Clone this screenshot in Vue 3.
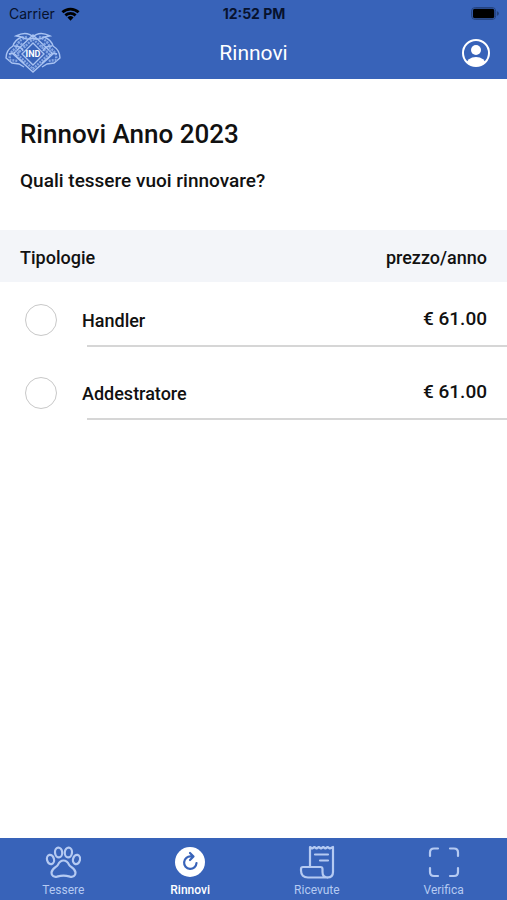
<template>
  <div class="app">
    <header class="top">
      <div class="status-bar">
        <div class="carrier">
          <span>Carrier</span>
          <svg class="wifi" viewBox="0 0 20 14" aria-hidden="true">
            <path d="M1.5 5.2a12.6 12.6 0 0 1 17 0M4.6 8.5a8 8 0 0 1 10.8 0" />
            <path class="solid" d="M6.8 10.6a4.8 4.8 0 0 1 6.4 0L10 14z" />
          </svg>
        </div>
        <span class="time">12:52 PM</span>
        <svg class="battery" viewBox="0 0 30 14" aria-hidden="true">
          <rect class="shell" x="0.5" y="0.5" width="26" height="13" rx="4" />
          <rect x="2" y="2" width="23" height="10" rx="2" />
          <path class="tip" d="M28 4.5a2.6 2.6 0 0 1 0 5z" />
        </svg>
      </div>

      <div class="nav-bar">
        <svg class="logo" viewBox="0 0 56 42" aria-hidden="true">
          <g class="crest">
            <path d="M28 3 48 22 28 40 8 22z" />
            <path class="beads" d="M28 7 44 22 28 37 12 22z" />
            <path d="M28 11 39 22 28 33 17 22z" />
            <path d="M28 5C23 0 17 1 11 4l6 1c-5 2-8 5-9 9-5 3-7 7-7 12l6 5 7 1 5 3" />
            <path d="M28 5c5-5 11-4 17-1l-6 1c5 2 8 5 9 9 5 3 7 7 7 12l-6 5-7 1-5 3" />
            <path class="beads" d="M22 5c-6 2-10 6-11 11-5 3-7 7-6 12l8 1M34 5c6 2 10 6 11 11 5 3 7 7 6 12l-8 1" />
            <path d="M9 14c5 0 8 2 9 5M47 14c-5 0-8 2-9 5M4 22c4-2 7 0 8 3l7 6M52 22c-4-2-7 0-8 3l-7 6" />
            <path d="M17 5c4 3 7 3 11 1 4 2 7 2 11-1" />
            <path class="beads" d="M13 10l8 5M43 10l-8 5M15 20l-7-2M41 20l7-2" />
          </g>
          <text x="28" y="25" text-anchor="middle">IND</text>
        </svg>
        <h1>Rinnovi</h1>
        <button class="profile" type="button" aria-label="Profilo">
          <svg viewBox="0 0 30 30" aria-hidden="true">
            <defs>
              <clipPath id="profile-clip"><circle cx="15" cy="15" r="13" /></clipPath>
            </defs>
            <circle class="ring" cx="15" cy="15" r="13" />
            <circle cx="15" cy="12" r="5" />
            <ellipse cx="15" cy="27" rx="10" ry="8" clip-path="url(#profile-clip)" />
          </svg>
        </button>
      </div>
    </header>

    <main>
      <section class="intro">
        <h2>Rinnovi Anno 2023</h2>
        <p>Quali tessere vuoi rinnovare?</p>
      </section>

      <div class="list-head">
        <span>Tipologie</span>
        <span>prezzo/anno</span>
      </div>

      <ul class="cards">
        <li v-for="card in cards" :key="card.id">
          <label class="card">
            <input v-model="selected" type="checkbox" :value="card.id" />
            <span class="name">{{ card.name }}</span>
            <span class="price">€ {{ card.price.toFixed(2) }}</span>
          </label>
        </li>
      </ul>
    </main>

    <nav class="tabs">
      <a
        v-for="tab in tabs"
        :key="tab.id"
        :href="'#' + tab.id"
        class="tab"
        :class="{ active: tab.id === activeTab }"
        @click.prevent="activeTab = tab.id"
      >
        <svg v-if="tab.id === 'tessere'" viewBox="0 0 36 36" aria-hidden="true">
          <ellipse cx="13.6" cy="8.5" rx="3.6" ry="4.9" transform="rotate(-6 13.6 8.5)" />
          <ellipse cx="23.4" cy="8.5" rx="3.6" ry="4.9" transform="rotate(6 23.4 8.5)" />
          <ellipse cx="5.5" cy="15.5" rx="3.5" ry="4.7" transform="rotate(-14 5.5 15.5)" />
          <ellipse cx="31.5" cy="15.5" rx="3.5" ry="4.7" transform="rotate(14 31.5 15.5)" />
          <path d="M18.5 16.5c-3 0-4.5 2-5.6 4.4-1 2.2-6.4 3.6-6.4 7.800 0 3.300 2.600 4.600 5.500 3.900 2.200-.6 4.200-1 6.500-1s4.300.4 6.500 1c2.900.7 5.500-.6 5.500-3.900 0-4.200-5.400-5.600-6.400-7.800-1.100-2.400-2.600-4.400-5.600-4.400z" />
        </svg>
        <svg v-else-if="tab.id === 'rinnovi'" viewBox="0 0 36 36" aria-hidden="true">
          <circle class="disc" cx="18" cy="18" r="15" />
          <path class="arrow" d="M19 12.500a6.200 6.200 0 1 0 5.500 6.500M18 9l3.500 3.500L18 16" />
        </svg>
        <svg v-else-if="tab.id === 'ricevute'" viewBox="0 0 36 36" aria-hidden="true">
          <path d="M11 23V3l2.200 1.500L15.400 3l2.200 1.500L19.800 3 22 4.500 24.200 3l2.200 1.500L28.600 3l2.200 1.500L34 3v25c0 3.500-2 5.500-5.500 5.500" />
          <path d="M28.500 33.500H9c-4.500 0-7-2.500-7-7V25c0-1.300.7-2 2-2h17.500c1.300 0 2 .7 2 2v3c0 3.500 1.700 5.500 5 5.500zM16 10.500h13M21 16.500h8" />
        </svg>
        <svg v-else viewBox="0 0 36 36" aria-hidden="true">
          <path d="M4 12V8.500c0-3 1-4 4-4h4M24 4.500h4c3 0 4 1 4 4V12M32 24v4c0 3-1 4-4 4h-4M12 32H8c-3 0-4-1-4-4v-4" />
        </svg>
        <span>{{ tab.label }}</span>
      </a>
    </nav>
  </div>
</template>

<script setup>
import { ref } from 'vue'

const cards = [
  { id: 'handler', name: 'Handler', price: 61 },
  { id: 'addestratore', name: 'Addestratore', price: 61 }
]

const tabs = [
  { id: 'tessere', label: 'Tessere' },
  { id: 'rinnovi', label: 'Rinnovi' },
  { id: 'ricevute', label: 'Ricevute' },
  { id: 'verifica', label: 'Verifica' }
]

const selected = ref([])
const activeTab = ref('rinnovi')
</script>

<style>
body {
  margin: 0;
  background: #ffffff;
}
</style>

<style scoped>
.app {
  display: flex;
  flex-direction: column;
  min-height: 100vh;
  font-family: Roboto, 'Liberation Sans', sans-serif;
  font-weight: 500;
  color: #111111;
}

.top {
  background: #3863b9;
}

.status-bar {
  display: grid;
  grid-template-columns: 1fr auto 1fr;
  align-items: center;
  height: 27px;
  padding: 0 8px 0 9px;
  font-family: Inter, sans-serif;
  font-size: 14px;
  color: #07122e;
}

.carrier {
  display: flex;
  align-items: center;
  gap: 6px;
  font-weight: 400;
}

.wifi {
  width: 19px;
  height: 14px;
  fill: none;
  stroke: #000000;
  stroke-width: 3;
}

.wifi .solid {
  fill: #000000;
  stroke: none;
}

.time {
  font-weight: 700;
}

.battery {
  width: 28px;
  height: 13px;
  justify-self: end;
  fill: #000000;
}

.battery .shell {
  fill: none;
  stroke: #234079;
}

.battery .tip {
  fill: #234079;
}

.nav-bar {
  display: grid;
  grid-template-columns: 1fr auto 1fr;
  align-items: center;
  height: 52px;
  padding: 0 5px;
}

.logo {
  width: 56px;
  height: 42px;
}

.crest {
  fill: none;
  stroke: #a9c3f2;
  stroke-width: 1.4;
}

.crest .beads {
  stroke-width: 2.4;
  stroke-dasharray: 2 1;
  stroke: #86a7e4;
}

.logo text {
  font-size: 9px;
  font-weight: 700;
  fill: #ffffff;
}

h1 {
  margin: 0;
  font-size: 21px;
  font-weight: 400;
  line-height: 24px;
  color: #ffffff;
}

.profile {
  display: flex;
  justify-self: end;
  margin-right: 11px;
  padding: 0;
  border: none;
  background: none;
  cursor: pointer;
}

.profile svg {
  width: 30px;
  height: 30px;
  fill: #ffffff;
}

.profile .ring {
  fill: none;
  stroke: #ffffff;
  stroke-width: 2;
}

main {
  flex: 1;
}

.intro {
  padding: 39px 20px 34px;
}

.intro h2 {
  margin: 0 0 16px;
  font-size: 26px;
  font-weight: 500;
  line-height: 32px;
}

.intro p {
  margin: 0;
  font-size: 19px;
  line-height: 30px;
}

.list-head {
  display: flex;
  align-items: center;
  justify-content: space-between;
  height: 52px;
  padding: 2px 20px 0;
  box-sizing: border-box;
  background: #f3f5f9;
  font-size: 18px;
}

.cards {
  display: flex;
  flex-direction: column;
  gap: 8px;
  margin: 0;
  padding: 0;
  list-style: none;
}

.cards li::after {
  content: '';
  display: block;
  height: 2px;
  margin-left: 87px;
  background: #d6d6d6;
}

.card {
  display: flex;
  align-items: center;
  height: 32px;
  padding: 22px 20px 9px 25px;
  cursor: pointer;
}

.card input {
  appearance: none;
  width: 32px;
  height: 32px;
  margin: 0 25px 0 0;
  border: 1px solid #c8c8c8;
  border-radius: 50%;
  background: #ffffff;
  cursor: pointer;
}

.card input:checked {
  border: 8px solid #3863b9;
}

.name {
  flex: 1;
  font-size: 18px;
}

.price {
  font-size: 19px;
  line-height: 24px;
  padding-bottom: 2px;
}

.tabs {
  display: grid;
  grid-template-columns: repeat(4, 1fr);
  height: 62px;
  background: #3863b9;
}

.tab {
  display: flex;
  flex-direction: column;
  align-items: center;
  padding-top: 6px;
  font-size: 12px;
  font-weight: 400;
  line-height: 14px;
  color: #b5caf2;
  text-decoration: none;
}

.tab.active {
  color: #ffffff;
  font-weight: 500;
}

.tab svg {
  width: 36px;
  height: 36px;
  margin-bottom: 3px;
  fill: none;
  stroke: currentColor;
  stroke-width: 2.2;
  stroke-linecap: round;
  stroke-linejoin: round;
}

.tab .disc {
  fill: currentColor;
  stroke: none;
}

.tab .arrow {
  stroke: #3863b9;
}
</style>
